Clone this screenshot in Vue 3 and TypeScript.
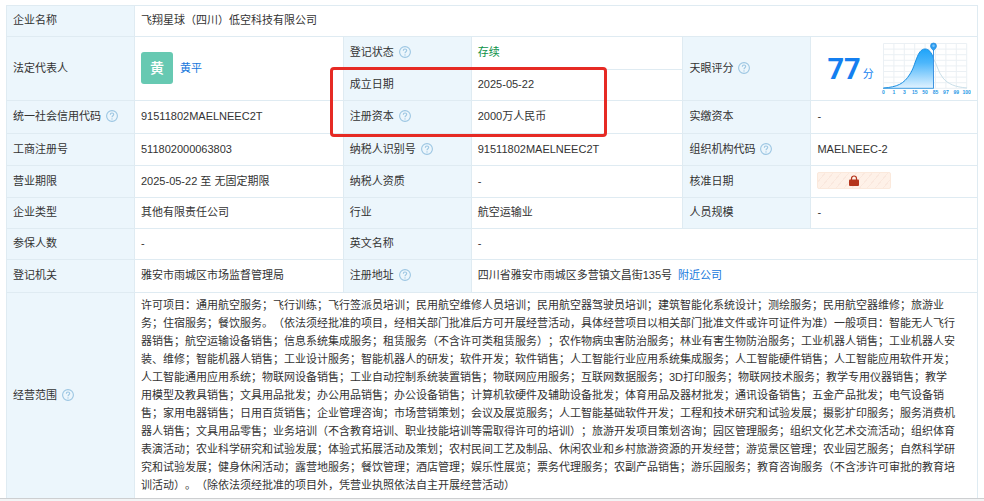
<script setup lang="ts">
import { defineComponent, h } from 'vue'

const HelpIcon = defineComponent({
  setup: () => () =>
    h('svg', { class: 'help', viewBox: '0 0 12 12', width: 12, height: 12, fill: 'none', 'aria-hidden': 'true' }, [
      h('circle', { cx: 6, cy: 6, r: 5.4, stroke: '#9cc6e2', 'stroke-width': 1.1 }),
      h('path', { d: 'M4.3 4.8c0-2.300 3.400-2.300 3.400-.2C7.700 5.800 6 5.800 6 7.300', stroke: '#9cc6e2', 'stroke-width': 1.1 }),
      h('circle', { cx: 6, cy: 8.9, r: 0.7, fill: '#9cc6e2' }),
    ]),
})

const ticks: string[] = ['0', '1', '3', '15', '50', '85', '97', '99', '100']
const gridX: number[] = ticks.map((_, i) => 4.5 + i * 10.4)
const gridY: number[] = ticks.map((_, i) => 2.5 + i * 5.6)

const scope: string[] = [
  '许可项目：通用航空服务；飞行训练；飞行签派员培训；民用航空维修人员培训；民用航空器驾驶员培训；建筑智能化系统设计；测绘服务；民用航空器维修；旅游业',
  '务；住宿服务；餐饮服务。（依法须经批准的项目，经相关部门批准后方可开展经营活动，具体经营项目以相关部门批准文件或许可证件为准）一般项目：智能无人飞行',
  '器销售；航空运输设备销售；信息系统集成服务；租赁服务（不含许可类租赁服务）；农作物病虫害防治服务；林业有害生物防治服务；工业机器人销售；工业机器人安',
  '装、维修；智能机器人销售；工业设计服务；智能机器人的研发；软件开发；软件销售；人工智能行业应用系统集成服务；人工智能硬件销售；人工智能应用软件开发；',
  '人工智能通用应用系统；物联网设备销售；工业自动控制系统装置销售；物联网应用服务；互联网数据服务；3D打印服务；物联网技术服务；教学专用仪器销售；教学',
  '用模型及教具销售；文具用品批发；办公用品销售；办公设备销售；计算机软硬件及辅助设备批发；体育用品及器材批发；通讯设备销售；五金产品批发；电气设备销',
  '售；家用电器销售；日用百货销售；企业管理咨询；市场营销策划；会议及展览服务；人工智能基础软件开发；工程和技术研究和试验发展；摄影扩印服务；服务消费机',
  '器人销售；文具用品零售；业务培训（不含教育培训、职业技能培训等需取得许可的培训）；旅游开发项目策划咨询；园区管理服务；组织文化艺术交流活动；组织体育',
  '表演活动；农业科学研究和试验发展；体验式拓展活动及策划；农村民间工艺及制品、休闲农业和乡村旅游资源的开发经营；游览景区管理；农业园艺服务；自然科学研',
  '究和试验发展；健身休闲活动；露营地服务；餐饮管理；酒店管理；娱乐性展览；票务代理服务；农副产品销售；游乐园服务；教育咨询服务（不含涉许可审批的教育培',
  '训活动）。（除依法须经批准的项目外，凭营业执照依法自主开展经营活动）',
]
</script>

<template>
  <main class="sheet">
    <table class="info">
      <colgroup>
        <col class="c-label" /><col class="c-first" />
        <col class="c-label" /><col class="c-second" />
        <col class="c-label" /><col />
      </colgroup>
      <tbody>
        <tr class="h31">
          <th scope="row">企业名称</th>
          <td colspan="5">飞翔星球（四川）低空科技有限公司</td>
        </tr>
        <tr class="h33">
          <th scope="row" rowspan="2">法定代表人</th>
          <td rowspan="2">
            <div class="person">
              <span class="avatar">黄</span>
              <a href="#">黄平</a>
            </div>
          </td>
          <th scope="row">登记状态<HelpIcon /></th>
          <td class="active">存续</td>
          <th scope="row" rowspan="2">天眼评分<HelpIcon /></th>
          <td rowspan="2" class="score-cell">
            <div class="score">
              <strong>77</strong><span class="unit">分</span>
              <svg class="curve" viewBox="0 0 92 56" width="92" height="56" aria-hidden="true">
                <defs>
                  <linearGradient id="fill" x1="0" y1="0" x2="0" y2="1">
                    <stop offset="0" stop-color="#1ea4fa" />
                    <stop offset="0.35" stop-color="#4cb6fb" />
                    <stop offset="1" stop-color="#e2f3ff" />
                  </linearGradient>
                </defs>
                <g stroke="#ebf0f4" stroke-width="1">
                  <line v-for="x in gridX" :key="'x' + x" :x1="x" :x2="x" y1="2.5" y2="47.3" />
                  <line v-for="y in gridY" :key="'y' + y" x1="4.5" x2="87.7" :y1="y" :y2="y" />
                </g>
                <path d="M54 17c4 6 5 14 10 20s12 9 24 10" fill="none" stroke="#c9dfe9" />
                <path d="M4.500 47C18 46 25 43 31 33C37 24 38 8 46 8C50 8 52 11 54.500 17V47.300H4.500z" fill="url(#fill)" />
                <path d="M4.500 47C18 46 25 43 31 33C37 24 38 8 46 8C50 8 52 11 54.500 17" fill="none" stroke="#1a8fe3" />
                <path d="M54.500 8V47.500" stroke="#3f93e0" />
                <path d="M4 47.300H54.500" stroke="#3d9ce0" />
                <path d="M51.500 5a3 3 0 1 1 6 0c0 2-1.500 2.800-3 4.700c-1.500-1.900-3-2.700-3-4.700z" fill="#2f9df0" stroke="#1583d6" stroke-width=".6" />
                <circle cx="54.500" cy="4.800" r="1.200" fill="#7cc6fa" />
                <g class="ticks">
                  <text v-for="(t, i) in ticks" :key="t" :x="gridX[i]" y="53">{{ t }}</text>
                </g>
              </svg>
            </div>
          </td>
        </tr>
        <tr class="h31">
          <th scope="row" class="anchor">成立日期<span class="marker"></span></th>
          <td>2025-05-22</td>
        </tr>
        <tr class="h33">
          <th scope="row">统一社会信用代码<HelpIcon /></th>
          <td>91511802MAELNEEC2T</td>
          <th scope="row">注册资本<HelpIcon /></th>
          <td>2000万人民币</td>
          <th scope="row">实缴资本</th>
          <td>-</td>
        </tr>
        <tr class="h32">
          <th scope="row">工商注册号</th>
          <td>511802000063803</td>
          <th scope="row">纳税人识别号<HelpIcon /></th>
          <td>91511802MAELNEEC2T</td>
          <th scope="row">组织机构代码<HelpIcon /></th>
          <td>MAELNEEC-2</td>
        </tr>
        <tr class="h32">
          <th scope="row">营业期限</th>
          <td>2025-05-22 至 无固定期限</td>
          <th scope="row">纳税人资质</th>
          <td>-</td>
          <th scope="row">核准日期</th>
          <td>
            <button type="button" class="locked" aria-label="解锁">
              <svg viewBox="0 0 10 12" width="10" height="12" aria-hidden="true">
                <path d="M2.500 5.500V3.500a2.500 2.500 0 0 1 5 0V5.500" fill="none" stroke="#b5351c" stroke-width="1.200" />
                <rect x="0" y="4.500" width="10" height="6.500" rx="1" fill="#b5351c" />
              </svg>
            </button>
          </td>
        </tr>
        <tr class="h31">
          <th scope="row">企业类型</th>
          <td>其他有限责任公司</td>
          <th scope="row">行业</th>
          <td>航空运输业</td>
          <th scope="row">人员规模</th>
          <td>-</td>
        </tr>
        <tr class="h31">
          <th scope="row">参保人数</th>
          <td>-</td>
          <th scope="row">英文名称</th>
          <td colspan="3">-</td>
        </tr>
        <tr class="h33">
          <th scope="row">登记机关</th>
          <td>雅安市雨城区市场监督管理局</td>
          <th scope="row">注册地址<HelpIcon /></th>
          <td colspan="3">四川省雅安市雨城区多营镇文昌街135号<a href="#" class="near">附近公司</a></td>
        </tr>
        <tr>
          <th scope="row">经营范围<HelpIcon /></th>
          <td colspan="5" class="scope">
            <span v-for="line in scope" :key="line">{{ line }}</span>
          </td>
        </tr>
      </tbody>
    </table>
  </main>
</template>

<style>
body {
  margin: 0;
  background: #f3f4f5;
}
</style>

<style scoped>
.sheet {
  padding: 5px 6px 0;
  background: #fff;
  border-bottom: 1px solid #cdcfd1;
  font-family: "Liberation Sans", "Noto Sans CJK SC", sans-serif;
  font-size: 11px;
  line-height: 18px;
  color: #333;
  text-spacing-trim: space-all;
}
.info {
  width: 100%;
  table-layout: fixed;
  border-collapse: collapse;
  border-bottom: hidden;
}
.c-label {
  width: 128px;
}
.c-first {
  width: 21.5%;
}
.c-second {
  width: 21.8%;
}
th,
td {
  box-sizing: border-box;
  padding: 0 6px 2px;
  border: 1px solid #dfebf2;
  font-weight: 400;
  text-align: left;
  vertical-align: middle;
}
th {
  background: #ecf6fc;
}
.h31 {
  height: 31px;
}
.h32 {
  height: 32px;
}
.h33 {
  height: 33px;
}
.help {
  margin-left: 5px;
  vertical-align: -2px;
}
a {
  color: #1677dc;
  text-decoration: none;
}
.active {
  color: #0c9248;
}
.person {
  display: flex;
  align-items: center;
  gap: 7px;
}
.avatar {
  width: 32px;
  border-radius: 3px;
  background: #67c9b2;
  color: #fff;
  font-size: 14px;
  font-weight: 500;
  line-height: 32px;
  text-align: center;
}
.score-cell {
  padding: 0 6px 0 16px;
}
.score {
  display: flex;
  align-items: center;
}
.score strong {
  color: #147ff0;
  font-family: Roboto, "Liberation Sans", sans-serif;
  font-size: 29px;
  line-height: 32px;
}
.unit {
  align-self: flex-end;
  margin: 0 auto 14px 2px;
  color: #147ff0;
}
.curve {
  flex: none;
}
.ticks {
  fill: #1f97e6;
  font-size: 5px;
  font-weight: 700;
  text-anchor: middle;
}
.anchor {
  position: relative;
}
.marker {
  position: absolute;
  z-index: 1;
  top: -3px;
  left: -14px;
  box-sizing: border-box;
  width: 277px;
  height: 70px;
  border: 3px solid #e62a24;
  border-radius: 4px;
  pointer-events: none;
}
.locked {
  display: flex;
  align-items: center;
  justify-content: center;
  width: 74px;
  height: 17px;
  padding: 0;
  border: 1px solid #fbe9dc;
  border-radius: 2px;
  background: repeating-linear-gradient(130deg, #fef1e8 0 5px, #fae8de 5px 6px);
}
.near {
  margin-left: 6px;
}
.scope {
  padding: 3px 6px 4px;
}
.scope span {
  display: block;
}
</style>
